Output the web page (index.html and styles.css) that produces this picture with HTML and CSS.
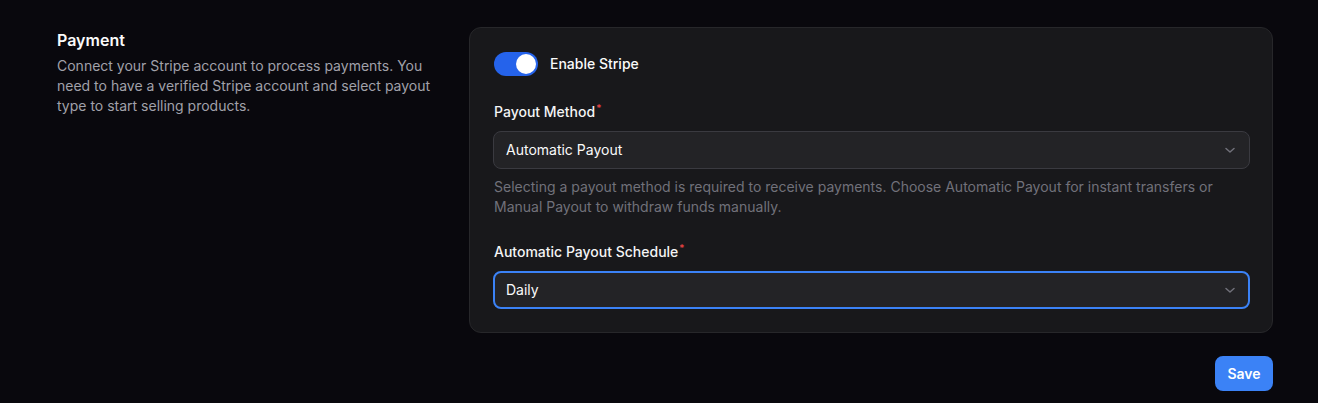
FILE: index.html
```html
<!DOCTYPE html>
<html lang="en">
<head>
<meta charset="utf-8">
<title>Payment settings</title>
<link rel="stylesheet" href="styles.css">
</head>
<body>
<main class="page">
  <section class="settings">
    <div class="intro">
      <h2 class="intro-title">Payment</h2>
      <p class="intro-text">Connect your Stripe account to process payments. You need to have a verified Stripe account and select payout type to start selling products.</p>
    </div>
    <div class="card">
      <div class="toggle-row">
        <span class="toggle"><span class="knob"></span></span>
        <span class="toggle-label">Enable Stripe</span>
      </div>
      <div class="field">
        <label class="label">Payout Method<span class="req">*</span></label>
        <div class="select">
          <span>Automatic Payout</span>
          <svg class="chev" width="16" height="16" viewBox="0 0 16 16" fill="none"><path d="M4 6.5l4 3.5 4-3.5" stroke="currentColor" stroke-width="1.5" stroke-linecap="round" stroke-linejoin="round"/></svg>
        </div>
        <p class="help">Selecting a payout method is required to receive payments. Choose Automatic Payout for instant transfers or Manual Payout to withdraw funds manually.</p>
      </div>
      <div class="field field-last">
        <label class="label">Automatic Payout Schedule<span class="req">*</span></label>
        <div class="select select-focus">
          <span>Daily</span>
          <svg class="chev" width="16" height="16" viewBox="0 0 16 16" fill="none"><path d="M4 6.5l4 3.5 4-3.5" stroke="currentColor" stroke-width="1.5" stroke-linecap="round" stroke-linejoin="round"/></svg>
        </div>
      </div>
    </div>
  </section>
  <div class="actions">
    <button class="save">Save</button>
  </div>
</main>
</body>
</html>
```

FILE: styles.css
```css
* { box-sizing: border-box; }
html, body { margin: 0; padding: 0; }
body {
  background: #09080d;
  color: #fafafa;
  font-family: Inter, "Noto Sans", sans-serif;
  font-size: 14px;
  line-height: 20px;
}
.page {
  padding: 27px 45px 0 57px;
}
.settings {
  display: grid;
  grid-template-columns: 388px 1fr;
  gap: 24px;
}
.intro-title {
  margin: 1px 0 0;
  font-size: 16px;
  line-height: 24px;
  font-weight: 600;
  color: #fafafa;
}
.intro-text {
  margin: 4px 0 0;
  color: #a1a1aa;
  font-size: 14px;
  line-height: 20px;
}
.card {
  background: #18181b;
  border: 1px solid #27272a;
  border-radius: 12px;
  padding: 24px 23px 23px 24px;
}
.toggle-row {
  display: flex;
  align-items: center;
  gap: 12px;
  height: 24px;
}
.toggle {
  width: 44px;
  height: 24px;
  border-radius: 12px;
  background: #2563eb;
  display: flex;
  align-items: center;
  justify-content: flex-end;
  padding: 2px;
}
.knob {
  width: 20px;
  height: 20px;
  border-radius: 50%;
  background: #ffffff;
}
.toggle-label {
  font-weight: 500;
  color: #fafafa;
}
.field { margin-top: 25px; }
.label {
  display: block;
  font-weight: 500;
  color: #f4f4f5;
  padding-top: 1px;
  margin-bottom: 9px;
}
.req {
  color: #ef4444;
  font-size: 10px;
  vertical-align: top;
  line-height: 10px;
  position: relative;
  top: 1px;
  margin-left: 1px;
}
.select {
  display: flex;
  align-items: center;
  justify-content: space-between;
  height: 38px;
  margin: 0 -1px;
  padding: 0 11px 0 12px;
  background: #232326;
  border: 1px solid #3a3a40;
  border-radius: 8px;
  color: #fafafa;
}
.select-focus {
  border: 2px solid #3b82f6;
  padding: 0 10px 0 11px;
}
.chev { color: #71717a; flex: none; }
.help {
  margin: 8px 0 0;
  color: #71717a;
}
.field-last { margin-top: 24px; }
.actions {
  display: flex;
  justify-content: flex-end;
  margin-top: 23px;
}
.save {
  font-family: Inter, "Noto Sans", sans-serif;
  font-size: 14px;
  font-weight: 600;
  color: #ffffff;
  background: #3b82f6;
  border: none;
  border-radius: 8px;
  height: 35px;
  width: 58px;
  padding: 0;
}
```
